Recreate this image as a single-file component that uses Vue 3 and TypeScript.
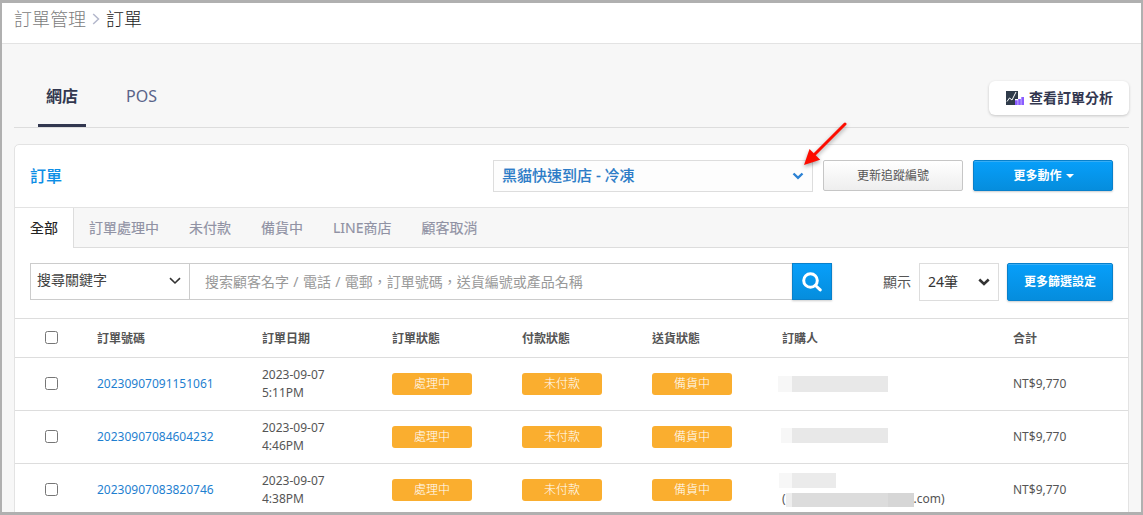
<script setup lang="ts">
interface Order {
  id: string
  date: string
  time: string
  total: string
  mask: string
  email?: boolean
}

const tabs: string[] = ['全部', '訂單處理中', '未付款', '備貨中', 'LINE商店', '顧客取消']
const columns: string[] = ['訂單號碼', '訂單日期', '訂單狀態', '付款狀態', '送貨狀態', '訂購人', '合計']
const statuses: string[] = ['處理中', '未付款', '備貨中']
const orders: Order[] = [
  { id: '20230907091151061', date: '2023-09-07', time: '5:11PM', total: 'NT$9,770', mask: 'a' },
  { id: '20230907084604232', date: '2023-09-07', time: '4:46PM', total: 'NT$9,770', mask: 'b' },
  { id: '20230907083820746', date: '2023-09-07', time: '4:38PM', total: 'NT$9,770', mask: 'c', email: true },
]
</script>

<template>
  <div class="window">
    <header class="crumbs">
      <span class="crumb">訂單管理</span>
      <svg class="crumb-sep" width="8" height="12" viewBox="0 0 8 12"><path d="M1.200 1 6.500 6 1.200 11" /></svg>
      <span class="crumb current">訂單</span>
    </header>

    <main class="page">
      <nav class="channels">
        <span class="channel active">網店</span>
        <span class="channel">POS</span>
        <button class="analysis">
          <svg width="18" height="14" viewBox="0 0 18 14">
            <path d="M0 0h12v8H9v6H0z" fill="#2f3b4a" />
            <path d="M1 10.500 3.500 7 6 9l4-8" fill="none" stroke="#fff" stroke-width="1" />
            <path d="M9 9.300h2.700V14H9zM12.200 8h2.600v6h-2.600zM15.300 6H18v8h-2.700z" fill="#8a5cff" />
          </svg>
          <span>查看訂單分析</span>
        </button>
      </nav>

      <section class="card">
        <div class="card-head">
          <h1>訂單</h1>
          <div class="shipping">
            <span>黑貓快速到店 - 冷凍</span>
            <svg width="12" height="8" viewBox="0 0 12 8"><path d="M1.500 1.500 6 5.800l4.500-4.300" /></svg>
          </div>
          <button class="btn plain">更新追蹤編號</button>
          <button class="btn primary more">更多動作<i class="caret"></i></button>
        </div>

        <nav class="tabs">
          <span v-for="(tab, i) in tabs" :key="tab" class="tab" :class="{ on: i === 0 }">{{ tab }}</span>
        </nav>

        <div class="filters">
          <div class="field">
            <span>搜尋關鍵字</span>
            <svg width="12" height="8" viewBox="0 0 12 8"><path d="M1 1.200 6 6l5-4.800" /></svg>
          </div>
          <div class="query">搜索顧客名字 / 電話 / 電郵，訂單號碼，送貨編號或產品名稱</div>
          <button class="search">
            <svg width="20" height="20" viewBox="0 0 20 20"><circle cx="8.500" cy="8.500" r="6.800" /><path d="m13.500 13.500 4.700 4.400" /></svg>
          </button>
          <span class="show">顯示</span>
          <div class="size">
            <span>24筆</span>
            <svg width="12" height="8" viewBox="0 0 12 8"><path d="M1.300 1.500 6 6l4.700-4.500" /></svg>
          </div>
          <button class="btn primary settings">更多篩選設定</button>
        </div>

        <div class="row head">
          <span class="check"><i class="box"></i></span>
          <b v-for="c in columns" :key="c">{{ c }}</b>
        </div>
        <div v-for="o in orders" :key="o.id" class="row">
          <span class="check"><i class="box"></i></span>
          <a>{{ o.id }}</a>
          <span>{{ o.date }}<br />{{ o.time }}</span>
          <span v-for="s in statuses" :key="s" class="badge">{{ s }}</span>
          <div class="buyer" :class="o.mask">
            <div class="mask"></div>
            <div v-if="o.email" class="email"><span>(</span><i class="mask-mail"></i><span>.com)</span></div>
          </div>
          <span>{{ o.total }}</span>
        </div>
      </section>
    </main>

    <svg class="pointer" width="70" height="60" viewBox="0 0 70 60">
      <path d="M60 9 29 40" fill="none" stroke="#fd0d00" stroke-width="3" stroke-linecap="round" />
      <path d="M19 50 24.500 34 35.200 44.700z" fill="#fd0d00" />
    </svg>
  </div>
</template>

<style>
body {
  margin: 0;
  overflow: hidden;
}
</style>

<style scoped>
* {
  box-sizing: border-box;
}
.window {
  position: relative;
  width: 1143px;
  height: 515px;
  overflow: hidden;
  border: solid #b0b0b0;
  border-width: 3px 2px;
  background: #f7f7f7;
  color: #555;
  font: 12px/18px "Noto Sans", "Noto Sans CJK TC", sans-serif;
  white-space: nowrap;
}
button {
  padding: 0;
  font-family: inherit;
}
svg {
  flex: none;
}
.crumbs {
  display: flex;
  align-items: center;
  height: 41px;
  padding: 0 12px 9px;
  border-bottom: 1px solid #e3e3e3;
  background: #fff;
  font-size: 18px;
  line-height: 26px;
}
.crumb {
  color: #7c7c7c;
  font-weight: 300;
}
.crumb.current {
  color: #222;
}
.crumb-sep {
  margin: 0 6px;
}
.crumb-sep path {
  fill: none;
  stroke: #b4b8cc;
  stroke-width: 1.5;
}
.page {
  padding: 30px 12px 0;
}
.channels {
  display: flex;
  height: 54px;
  padding-left: 24px;
  border-bottom: 1px solid #ddd;
  font-size: 16px;
  line-height: 44px;
}
.channel {
  height: 53px;
  padding: 0 8px;
  color: #596489;
}
.channel + .channel {
  margin-left: 32px;
}
.channel.active {
  color: #32374f;
  font-weight: 700;
  border-bottom: 3px solid #32374f;
}
.analysis {
  display: flex;
  align-items: center;
  gap: 5px;
  width: 140px;
  height: 34px;
  margin: 7px 0 0 auto;
  padding: 0 0 1px 17px;
  border: 0;
  border-radius: 6px;
  background: #fff;
  box-shadow: 0 1px 3px rgba(0, 0, 0, 0.2);
  color: #32374f;
  font-size: 14px;
  font-weight: 700;
  line-height: 19px;
}
.card {
  height: 420px;
  margin-top: 16px;
  border: 1px solid #e3e3e3;
  border-radius: 5px 5px 0 0;
  background: #fff;
}
.card-head {
  display: flex;
  height: 63px;
  padding: 15px 15px 0;
  border-bottom: 1px solid #e3e3e3;
}
h1 {
  margin: 0 auto 0 0;
  color: #0c8ee6;
  font-size: 16px;
  font-weight: 500;
  line-height: 33px;
  -webkit-text-stroke: 0.1px;
}
.shipping {
  display: flex;
  align-items: center;
  justify-content: space-between;
  width: 320px;
  height: 32px;
  padding: 0 8px;
  border: 1px solid #ddd;
  background: #fdfdfd;
  color: #2c7cc7;
  font-size: 15px;
  font-weight: 500;
  -webkit-text-stroke: 0.1px;
}
.shipping span {
  margin-bottom: 2px;
}
.shipping path {
  fill: none;
  stroke: #2c82d4;
  stroke-width: 2.4;
}
.btn {
  border: 1px solid #c6c6c6;
  border-radius: 2px;
  font-size: 12px;
  line-height: 18px;
}
.plain {
  width: 140px;
  height: 31px;
  margin-left: 10px;
  padding-top: 1px;
  background: linear-gradient(#fff, #eee);
  color: #555;
}
.primary {
  border-color: #0880cb;
  background: linear-gradient(#079ffa, #058ddd);
  box-shadow: inset 0 1px #37adf5, 0 1px 2px rgba(0, 0, 0, 0.2);
  color: #fff;
  font-weight: 700;
}
.more {
  width: 140px;
  height: 31px;
  margin-left: 10px;
  padding: 1px 0 0 1px;
}
.caret {
  display: inline-block;
  margin: 0 0 2px 4px;
  border: 4px solid transparent;
  border-top-color: #fff;
  border-bottom: 0;
}
.tabs {
  display: flex;
  height: 40px;
  border-bottom: 1px solid #ddd;
  background: #f7f7f7;
  font-size: 14px;
  line-height: 40px;
  -webkit-text-stroke: 0.15px;
}
.tab {
  padding: 0 15px;
  color: #9092a4;
}
.tab.on {
  height: 40px;
  border-right: 1px solid #ddd;
  background: #fff;
  color: #222;
}
.filters {
  display: flex;
  height: 70px;
  padding: 15px 15px 0;
  font-size: 14px;
}
.field {
  display: flex;
  justify-content: space-between;
  width: 160px;
  height: 37px;
  padding: 0 8px 0 6px;
  border: 1px solid #ccc;
  color: #444;
  line-height: 31px;
}
.field svg {
  margin-top: 13px;
}
.field path,
.size path {
  fill: none;
  stroke: #333;
  stroke-width: 1.6;
}
.query {
  width: 602px;
  height: 37px;
  padding-left: 15px;
  border: solid #ccc;
  border-width: 1px 0;
  color: #999;
  line-height: 35px;
  word-spacing: 0.7px;
}
.search {
  display: grid;
  place-items: center;
  width: 40px;
  height: 37px;
  border: 1px solid #0880cb;
  background: linear-gradient(#079ffa, #058ddd);
  box-shadow: 0 1px 2px rgba(0, 0, 0, 0.2);
}
.search svg {
  fill: none;
  stroke: #fff;
  stroke-width: 3;
  stroke-linecap: round;
}
.show {
  margin-left: auto;
  line-height: 37px;
}
.size {
  display: flex;
  align-items: center;
  justify-content: space-between;
  width: 80px;
  height: 38px;
  margin: 0 8px;
  padding: 0 8px;
  border: 1px solid #ddd;
  color: #333;
}
.size path {
  stroke-width: 2.6;
}
.settings {
  width: 106px;
  height: 38px;
}
.row {
  display: grid;
  grid-template-columns: 82px 165px 130px 130px 130px 130px 231px 1fr;
  align-items: center;
  height: 53px;
  border-top: 1px solid #ddd;
}
.row.head {
  height: 39px;
}
.row.head b {
  padding-top: 1px;
}
.check {
  padding: 0 0 2px 30px;
}
.box {
  display: block;
  width: 13px;
  height: 13px;
  border: 1px solid #767676;
  border-radius: 2.5px;
  background: #fff;
}
.row a {
  color: #1f7fd0;
}
.badge {
  width: 80px;
  height: 22px;
  border-radius: 3px;
  background: #faae2f;
  color: #fff;
  font-weight: 300;
  line-height: 22px;
  text-align: center;
}
.mask {
  width: 110px;
  height: 16px;
  margin: 1px 0 0 -4px;
  background: linear-gradient(90deg, #f7f7f7 14px, #e8e8e8 14px);
}
.a .mask {
  margin-bottom: 1px;
}
.b .mask {
  width: 107px;
  height: 15px;
  margin: -3px 0 0 -1px;
  background: linear-gradient(90deg, #f7f7f7 11px, #e8e8e8 11px);
}
.c .mask {
  width: 57px;
  height: 15px;
  margin: 1px 0 2px -3px;
  background: linear-gradient(90deg, #f7f7f7 13px, #ebebeb 13px);
}
.email {
  display: flex;
  align-items: center;
}
.mask-mail {
  width: 128px;
  height: 14px;
  margin-top: 2px;
  background: linear-gradient(90deg, #eee 6px, #dcdcdc 6px 102px, #d6d6d6 102px);
}
.pointer {
  position: absolute;
  left: 783px;
  top: 112px;
  filter: drop-shadow(0 2px 2px rgba(0, 0, 0, 0.35));
}
</style>
